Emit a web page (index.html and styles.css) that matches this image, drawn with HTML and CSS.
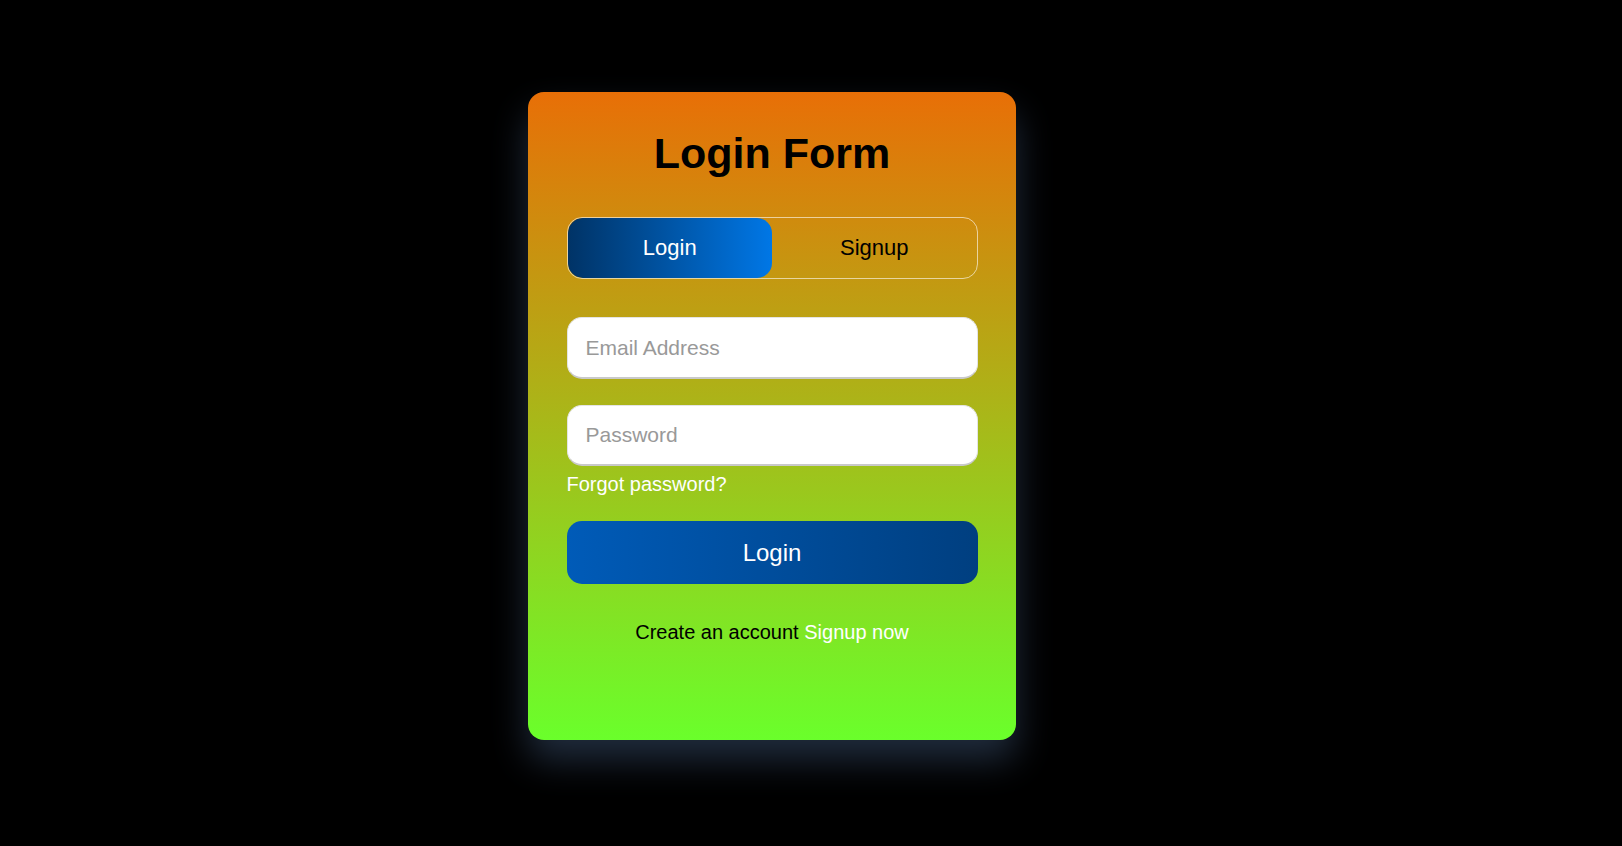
FILE: index.html
```html
<!DOCTYPE html>
<html lang="en">
<head>
<meta charset="utf-8">
<title>Login Form</title>
<link rel="stylesheet" href="styles.css">
</head>
<body>
  <div class="card">
    <h1 class="title">Login Form</h1>
    <div class="toggle">
      <div class="toggle-item active">Login</div>
      <div class="toggle-item">Signup</div>
    </div>
    <form class="form">
      <input class="field field-email" type="text" placeholder="Email Address">
      <input class="field field-pass" type="password" placeholder="Password">
      <a class="forgot" href="#">Forgot password?</a>
      <button class="submit" type="button">Login</button>
    </form>
    <p class="signup">Create an account <a href="#" class="signup-link">Signup now</a></p>
  </div>
</body>
</html>
```
FILE: styles.css
```css
html, body {
  margin: 0;
}
body {
  background: #000;
  font-family: "Liberation Sans", Arial, sans-serif;
  min-height: 100vh;
  display: flex;
  justify-content: center;
  align-items: center;
  padding: 0 78px 14px 0;
  box-sizing: border-box;
}
.card {
  width: 488px;
  box-sizing: border-box;
  padding: 37px 38.5px 96px;
  background: linear-gradient(to bottom, #e86f07, #6aff2b);
  border-radius: 16px;
  box-shadow: 0 20px 36px rgba(38, 52, 72, 0.85);
}
.title {
  margin: 0;
  font-size: 43px;
  font-weight: 700;
  line-height: 49px;
  text-align: center;
  color: #000;
}
.toggle {
  margin-top: 39px;
  height: 62px;
  box-sizing: border-box;
  display: flex;
  border: 1px solid rgba(255, 255, 255, 0.6);
  border-radius: 15px;
  overflow: hidden;
}
.toggle-item {
  flex: 1;
  display: flex;
  align-items: center;
  justify-content: center;
  font-size: 22px;
  color: #000;
  border-radius: 15px;
}
.toggle-item.active {
  color: #fff;
  background: linear-gradient(to right, #003366, #0077e6);
}
.form {
  margin: 38px 0 0;
  display: flex;
  flex-direction: column;
}
.field {
  width: 100%;
  height: 62px;
  box-sizing: border-box;
  border: 1px solid #e4e4e4;
  border-bottom: 2px solid #c9c9c9;
  border-radius: 15px;
  background: #fff;
  padding: 0 18px;
  font-family: "Liberation Sans", Arial, sans-serif;
  font-size: 21px;
  color: #333;
  outline: none;
}
.field::placeholder {
  color: #999;
}
.field-pass {
  margin-top: 26px;
  height: 61px;
}
.forgot {
  margin-top: 7px;
  font-size: 20px;
  line-height: 23px;
  color: #fff;
  text-decoration: none;
  align-self: flex-start;
}
.submit {
  margin-top: 25px;
  height: 63px;
  border: none;
  border-radius: 15px;
  background: linear-gradient(to right, #005bb8, #003f80);
  color: #fff;
  font-family: "Liberation Sans", Arial, sans-serif;
  font-size: 24px;
  cursor: pointer;
}
.signup {
  margin: 37px 0 0;
  font-size: 20px;
  line-height: 23px;
  text-align: center;
  color: #000;
}
.signup-link {
  color: #fff;
  text-decoration: none;
}
```
